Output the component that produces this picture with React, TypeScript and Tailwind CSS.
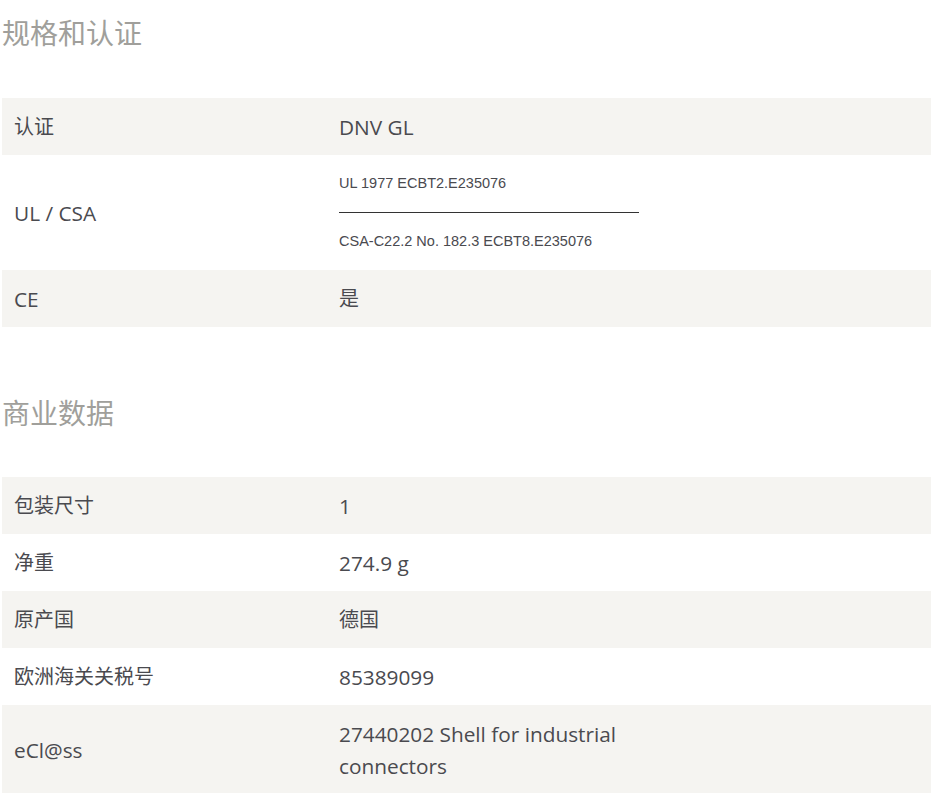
import React from "react";

const body = { fontFamily: '"Open Sans", "Noto Sans CJK SC", sans-serif' };

function Cell({ latin, children }: { latin?: boolean; children: React.ReactNode }) {
  return (
    <div className={`w-[325px] shrink-0 px-3 py-[12.5px] leading-8 text-[#4a4a4f] ${latin ? "text-[20.8px]" : "text-[20px]"}`}>
      {children}
    </div>
  );
}

function Row({
  label,
  children,
  shaded,
  latinLabel,
  latinValue,
}: {
  label: string;
  children: React.ReactNode;
  shaded?: boolean;
  latinLabel?: boolean;
  latinValue?: boolean;
}) {
  return (
    <div className={`flex items-center ${shaded ? "bg-[#f5f4f1]" : ""}`}>
      <Cell latin={latinLabel}>{label}</Cell>
      <Cell latin={latinValue}>{children}</Cell>
      <div className="flex-1" />
    </div>
  );
}

export default function App() {
  return (
    <div className="bg-white min-h-[793px] pl-[2px]" style={body}>
      <h2 className="text-[28px] leading-[66px] text-[#a09f9b] font-normal mb-[32px]">规格和认证</h2>
      <div>
        <Row label="认证" shaded latinValue>
          DNV GL
        </Row>
        <div className="flex items-center">
          <div className="w-[325px] shrink-0 px-3 text-[20.8px] leading-8 text-[#4a4a4f]">UL / CSA</div>
          <div className="w-[325px] shrink-0 px-3 py-[13px]">
            <div className="text-[14.5px] leading-[31px] text-[#4a4a4f]" style={{ fontFamily: '"Liberation Sans", Arial, sans-serif' }}>
              UL 1977 ECBT2.E235076
            </div>
            <div className="w-[300px] h-px bg-[#333] my-[13px]" />
            <div className="text-[14.5px] leading-[31px] text-[#4a4a4f]" style={{ fontFamily: '"Liberation Sans", Arial, sans-serif' }}>
              CSA-C22.2 No. 182.3 ECBT8.E235076
            </div>
          </div>
          <div className="flex-1" />
        </div>
        <Row label="CE" shaded latinLabel>
          是
        </Row>
      </div>
      <h2 className="text-[28px] leading-[66px] text-[#a09f9b] font-normal mt-[53px] mb-[31px]">商业数据</h2>
      <div>
        <Row label="包装尺寸" shaded latinValue>
          1
        </Row>
        <Row label="净重" latinValue>
          274.9 g
        </Row>
        <Row label="原产国" shaded>
          德国
        </Row>
        <Row label="欧洲海关关税号" latinValue>
          85389099
        </Row>
        <Row label="eCl@ss" shaded latinLabel latinValue>
          27440202 Shell for industrial connectors
        </Row>
      </div>
    </div>
  );
}
